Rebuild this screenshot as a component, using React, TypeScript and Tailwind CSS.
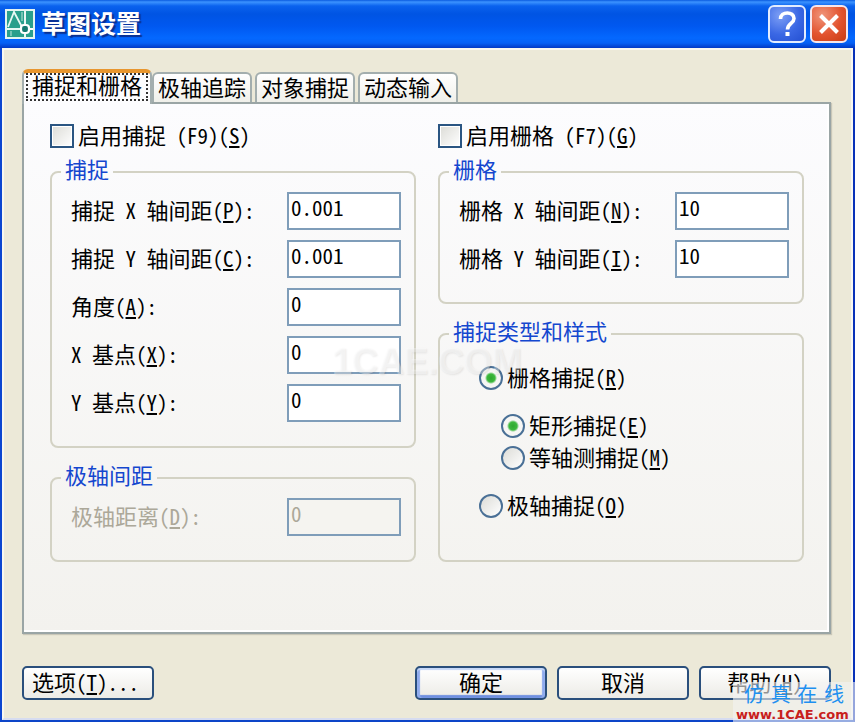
import { useState, type ReactNode } from "react";

function Half({ children }: { children: ReactNode }) {
  return (
    <span className="whitespace-pre text-[21px] [font-feature-settings:'hwid']">{children}</span>
  );
}

function Key({ k, after = "" }: { k: string; after?: string }) {
  return (
    <Half>
      (<u className="decoration-2 underline-offset-2">{k}</u>){after}
    </Half>
  );
}

function Group({ title, className = "", children }: { title: string; className?: string; children: ReactNode }) {
  return (
    <fieldset className={`min-w-0 rounded-lg border-2 border-[#d3d2c4] pl-[19px] pr-[13px] ${className}`}>
      <legend className="-ml-2.5 h-6 px-1 leading-4 text-[#1447cf]">{title}</legend>
      {children}
    </fieldset>
  );
}

function Field({ id, value, disabled = false, children }: { id: string; value: string; disabled?: boolean; children: ReactNode }) {
  return (
    <div className="flex items-center justify-between">
      <label htmlFor={id} className={disabled ? "pb-1 text-[#aca899]" : "pb-1"}>
        {children}
      </label>
      <input
        id={id}
        type="text"
        defaultValue={value}
        disabled={disabled}
        className="h-[38px] w-[114px] border-2 border-[#7f9db9] bg-white px-0.5 pb-2 text-[21px] outline-none [font-feature-settings:'hwid'] disabled:bg-[#f5f4f0] disabled:text-[#aca899]"
      />
    </div>
  );
}

function Check({ id, children }: { id: string; children: ReactNode }) {
  return (
    <div className="flex h-6 items-center gap-1">
      <input
        id={id}
        type="checkbox"
        className="size-6 shrink-0 appearance-none border-2 border-[#2a5582] bg-linear-to-br from-[#dcdcd7] to-white shadow-[inset_0_0_0_1px_#fff] checked:bg-[#21a121]"
      />
      <label htmlFor={id} className="pb-1">{children}</label>
    </div>
  );
}

function Radio({ id, name, checked = false, inset = false, children }: { id: string; name: string; checked?: boolean; inset?: boolean; children: ReactNode }) {
  return (
    <div className={`flex h-8 items-center gap-1 ${inset ? "ml-[22px]" : ""}`}>
      <input
        id={id}
        type="radio"
        name={name}
        defaultChecked={checked}
        className="size-6 shrink-0 appearance-none rounded-full border-2 border-[#4a7096] bg-linear-to-br from-[#dcdcd7] to-white checked:bg-[radial-gradient(circle,#2fa82f_0,#3db83d_4px,#f6f6f4_6px)]"
      />
      <label htmlFor={id} className="pb-1">{children}</label>
    </div>
  );
}

const push =
  "h-[34px] w-[132px] rounded-[5px] border-2 border-[#2a4f7c] bg-linear-to-b from-white to-[#ecebe6] pb-1 leading-6";

const tabs = ["捕捉和栅格", "极轴追踪", "对象捕捉", "动态输入"];

export default function App() {
  const [active, setActive] = useState(0);
  return (
    <div className="relative flex min-h-screen flex-col overflow-hidden bg-[#ece9d8] font-['Noto_Sans_CJK_SC',sans-serif] text-[22px] leading-6 text-black">
      <header className="flex h-12 shrink-0 items-center gap-1.5 bg-[linear-gradient(180deg,#0a5be0_0,#3c93ff_2px,#0a62ee_6px,#0054e3_14px,#0058f0_26px,#0468ff_38px,#0560f5_43px,#0238c4_48px)] pl-[5px] pr-[7px]">
        <svg viewBox="0 0 30 30" className="size-[30px] shrink-0" fill="none" aria-hidden="true">
          <rect x="1" y="1" width="28" height="28" fill="#2a9f8c" stroke="#e4f4f0" strokeWidth="2" />
          <path d="M3 18 9 3l8 15M2 20h14" stroke="#e8f8f4" strokeWidth="1.800" />
          <path d="M20 2v13M20 24v4M24 20h4" stroke="#fff" strokeWidth="1.800" />
          <path d="M6 27v-5M17 3v9" stroke="#bfe6dc" strokeWidth="1" />
          <rect x="16" y="16" width="8" height="8" rx="3" fill="#157a70" stroke="#fff" strokeWidth="2.200" />
        </svg>
        <h1 className="grow pb-1 text-[25px] font-bold leading-8 text-white [text-shadow:2px_2px_1px_#0a2f8f]">草图设置</h1>
        <div className="flex gap-1">
          <button type="button" aria-label="帮助" className="size-[38px] rounded-md border-2 border-[#e3ecff] bg-[radial-gradient(circle_at_30%_25%,#7d9ff5,#3a67e4_55%,#2450d2)]">
            <svg viewBox="0 0 34 34" className="size-full" fill="none" aria-hidden="true">
              <path d="M10.500 12C10.500 4 24 4 24 11.500c0 5-6.500 5-6.500 11" stroke="#fff" strokeWidth="3.600" />
              <rect x="15.500" y="25" width="4" height="4" fill="#fff" />
            </svg>
          </button>
          <button type="button" aria-label="关闭" className="size-[38px] rounded-md border-2 border-[#f7e6ea] bg-[radial-gradient(circle_at_30%_25%,#f0957a,#e2532f_55%,#c93c14)]">
            <svg viewBox="0 0 34 34" className="size-full" fill="none" aria-hidden="true">
              <path d="m8.500 8.500 17 17m0-17-17 17" stroke="#fff" strokeWidth="4" />
            </svg>
          </button>
        </div>
      </header>

      <main className="flex grow flex-col border-x-2 border-b-2 border-l-[#0b45d0] border-r-[#0831b8] border-b-[#0d45c8]">
        <div className="grow border-2 border-[#f8f7f0] border-b-[#d6dcf0] pl-[18px] pr-5 pt-[19px]">
          <div role="tablist" className="relative -mb-0.5 flex items-end">
            {tabs.map((t, i) => (
              <button
                key={t}
                type="button"
                role="tab"
                aria-selected={i === active}
                onClick={() => setActive(i)}
                className={
                  i === active
                    ? "h-[35px] rounded-t-md border-x-2 border-t-4 border-x-[#a3aeae] border-t-[#e8962e] bg-[#fcfcfe] px-0.5 pb-[3px]"
                    : "mb-0.5 mr-[3px] h-[30px] rounded-t-md border-2 border-b-0 border-[#a3aeae] bg-linear-to-b from-white to-[#f0f0ea] px-1 pb-1 leading-6"
                }
              >
                {i === active ? (
                  <span className="flex h-7 items-center border-2 border-dotted border-[#333] px-1 pb-1.5">{t}</span>
                ) : (
                  t
                )}
              </button>
            ))}
          </div>

          <section className="grid grid-cols-2 gap-[22px] border-2 border-[#9aa5a5] bg-linear-to-b from-[#fcfcfe] to-[#f3f2ee] pb-[70px] pl-[26px] pr-[25px] pt-5 shadow-[inset_-1px_-1px_0_1px_#fff,1px_1px_1px_#c9c7b8]">
            <div className="flex flex-col">
              <Check id="snap-on">
                启用捕捉<Half> (F9)</Half>
                <Key k="S" />
              </Check>
              <div className="mt-3 flex grow flex-col gap-[18px]">
                <Group title="捕捉" className="pb-6 pt-2">
                  <div className="flex flex-col gap-2.5">
                    <Field id="snap-x" value="0.001">
                      捕捉<Half> X </Half>轴间距<Key k="P" after=":" />
                    </Field>
                    <Field id="snap-y" value="0.001">
                      捕捉<Half> Y </Half>轴间距<Key k="C" after=":" />
                    </Field>
                    <Field id="angle" value="0">
                      角度<Key k="A" after=":" />
                    </Field>
                    <Field id="base-x" value="0">
                      <Half>X </Half>基点<Key k="X" after=":" />
                    </Field>
                    <Field id="base-y" value="0">
                      <Half>Y </Half>基点<Key k="Y" after=":" />
                    </Field>
                  </div>
                </Group>
                <Group title="极轴间距" className="pb-6 pt-2">
                  <Field id="polar" value="0" disabled>
                    极轴距离<Key k="D" after=":" />
                  </Field>
                </Group>
              </div>
            </div>

            <div className="flex flex-col">
              <Check id="grid-on">
                启用栅格<Half> (F7)</Half>
                <Key k="G" />
              </Check>
              <div className="mt-3 flex grow flex-col gap-[18px]">
                <Group title="栅格" className="pb-6 pt-2">
                  <div className="flex flex-col gap-2.5">
                    <Field id="grid-x" value="10">
                      栅格<Half> X </Half>轴间距<Key k="N" after=":" />
                    </Field>
                    <Field id="grid-y" value="10">
                      栅格<Half> Y </Half>轴间距<Key k="I" after=":" />
                    </Field>
                  </div>
                </Group>
                <Group title="捕捉类型和样式" className="grow pt-4">
                  <div className="flex flex-col pl-5">
                    <Radio id="type-grid" name="type" checked>
                      栅格捕捉<Key k="R" />
                    </Radio>
                    <div className="my-4 flex flex-col">
                      <Radio id="style-rect" name="style" checked inset>
                        矩形捕捉<Key k="E" />
                      </Radio>
                      <Radio id="style-iso" name="style" inset>
                        等轴测捕捉<Key k="M" />
                      </Radio>
                    </div>
                    <Radio id="type-polar" name="type">
                      极轴捕捉<Key k="O" />
                    </Radio>
                  </div>
                </Group>
              </div>
            </div>
          </section>

          <footer className="flex items-center justify-between pb-4 pt-8">
            <button type="button" className={`${push} pl-2 text-left`}>
              选项<Key k="T" after="..." />
            </button>
            <div className="flex gap-2.5">
              <button type="button" className={`${push} shadow-[inset_0_2px_1px_#c6d8f8,inset_3px_0_1px_#8fabee,inset_-3px_0_1px_#8fabee,inset_0_-3px_1px_#6f8fe0]`}>
                确定
              </button>
              <button type="button" className={push}>
                取消
              </button>
              <button type="button" className={push}>
                帮助<Key k="H" />
              </button>
            </div>
          </footer>
        </div>
      </main>

      <div className="pointer-events-none absolute left-[332px] top-[340px] font-['Liberation_Sans',sans-serif] text-[36px] font-bold leading-[44px] text-white/40 [text-shadow:1px_1px_2px_rgba(0,0,0,0.08)]">
        1CAE.COM
      </div>
      <div className="pointer-events-none absolute bottom-0 right-0 w-[122px] bg-[#f4f3f3]/60 px-[3px]">
        <div className="flex justify-between px-2 pb-0.5 text-[20px] leading-6 text-[#1e90f0]">
          {["仿", "真", "在", "线"].map((c) => (
            <span key={c}>{c}</span>
          ))}
        </div>
        <div className="whitespace-nowrap font-['DejaVu_Sans',sans-serif] text-[13px] font-bold leading-[14px] text-[#c8201c]">www.1CAE.com</div>
      </div>
    </div>
  );
}
